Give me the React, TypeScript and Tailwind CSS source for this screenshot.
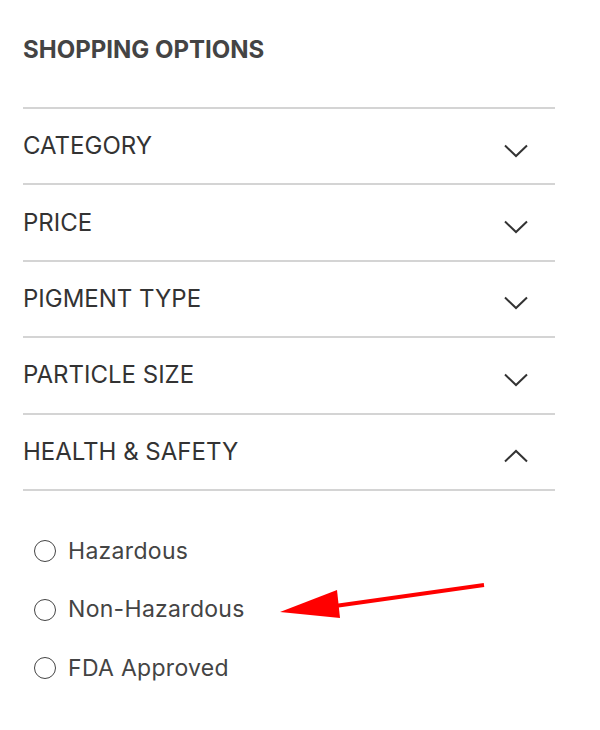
const sections = [
  { label: "CATEGORY", open: false },
  { label: "PRICE", open: false },
  { label: "PIGMENT TYPE", open: false },
  { label: "PARTICLE SIZE", open: false },
  { label: "HEALTH & SAFETY", open: true },
];

const options = ["Hazardous", "Non-Hazardous", "FDA Approved"];

function Chevron({ up }: { up: boolean }) {
  return (
    <svg width="24" height="14" viewBox="0 0 24 14" className="mt-[9px] text-[#333]">
      <polyline
        points={up ? "1,12.5 12,2 23,12.5" : "1,1.5 12,12 23,1.5"}
        fill="none"
        stroke="currentColor"
        strokeWidth="2"
      />
    </svg>
  );
}

export default function App() {
  return (
    <div className="relative h-[730px] w-[600px] bg-white font-['Inter',sans-serif]">
      <div className="w-[555px] pl-[23px]">
        <h2 className="pt-[35px] text-[24px] font-bold leading-[30px] text-[#444]">SHOPPING OPTIONS</h2>
        <div className="mt-[42px] border-t-2 border-[#d4d4d4]">
          {sections.map((s) => (
            <div key={s.label} className="flex h-[76.4px] items-center justify-between border-b-2 border-[#d4d4d4] pr-[27px]">
              <span className="text-[24px] leading-none text-[#333]">{s.label}</span>
              <Chevron up={s.open} />
            </div>
          ))}
        </div>
        <div className="pt-[31px] pl-[11px]">
          {options.map((o) => (
            <label key={o} className="flex h-[58.5px] items-center gap-[12px]">
              <span className="h-[22px] w-[22px] rounded-full border-[1.5px] border-[#444]" />
              <span className="text-[23px] leading-none tracking-[0.3px] text-[#444]">{o}</span>
            </label>
          ))}
        </div>
      </div>
      <svg className="absolute left-0 top-0" width="600" height="730" viewBox="0 0 600 730">
        <line x1="484" y1="585" x2="335" y2="606" stroke="#f00" strokeWidth="4" />
        <polygon points="280,612 337,590 340,618" fill="#f00" />
      </svg>
    </div>
  );
}
